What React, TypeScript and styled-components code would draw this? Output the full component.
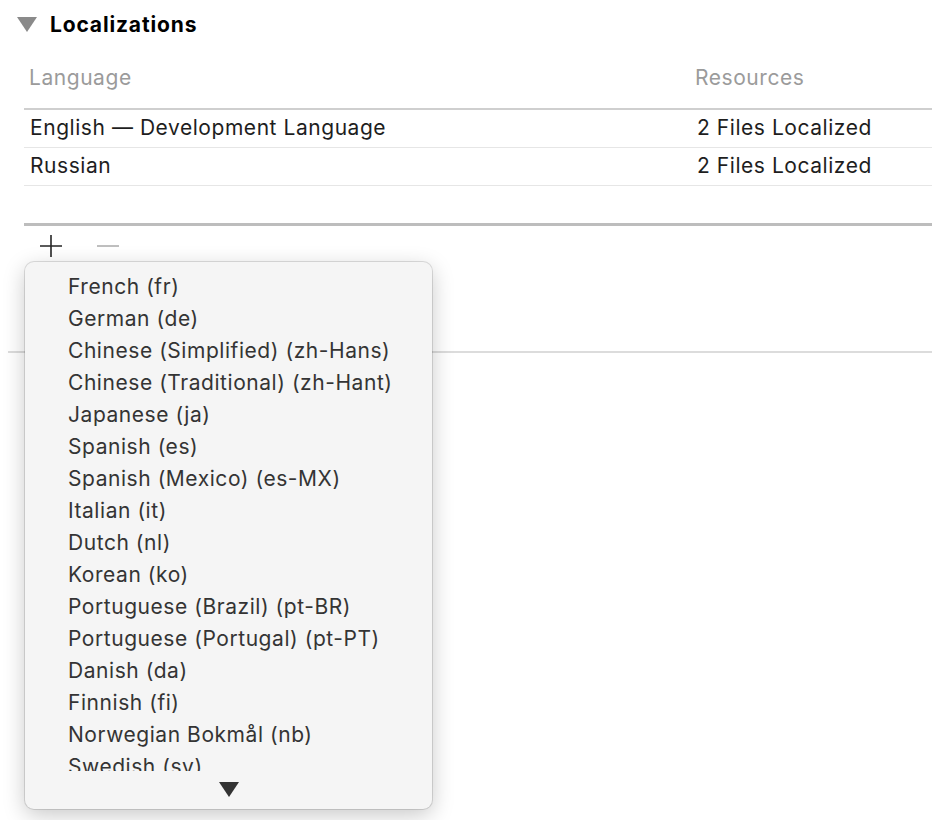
import React from 'react'
import styled, { createGlobalStyle } from 'styled-components'

const GlobalStyle = createGlobalStyle`
    html, body {
        margin: 0;
        padding: 0;
        background: #ffffff;
        overflow: hidden;
    }
    body {
        font-family: Inter, "Helvetica Neue", "Liberation Sans", Arial, sans-serif;
        -webkit-font-smoothing: antialiased;
    }
`

const Page = styled.div`
    position: relative;
    width: 932px;
    height: 820px;
    overflow: hidden;
    background: #ffffff;
`

const SectionHeader = styled.div`
    height: 48px;
    display: flex;
    align-items: center;
    padding-left: 17px;
    gap: 13px;
`

const Disclosure = styled.svg`
    width: 20px;
    height: 15px;
    fill: #8a8a8a;
`

const SectionTitle = styled.h2`
    margin: 0;
    font-size: 21px;
    font-weight: 700;
    color: #000000;
    letter-spacing: 0.85px;
`

const Table = styled.div`
    margin-left: 24px;
`

const Row = styled.div<{ $header?: boolean }>`
    display: grid;
    grid-template-columns: 666px 1fr;
    align-items: center;
    font-size: 21px;
    letter-spacing: 0.55px;
    box-sizing: border-box;
    height: ${p => (p.$header ? '62px' : '38px')};
    padding-bottom: ${p => (p.$header ? '1px' : '3px')};
    color: ${p => (p.$header ? '#9b9b9b' : '#1e1e1e')};
    border-bottom: ${p => (p.$header ? '2px solid #cfcfcf' : '1px solid #e6e6e6')};
`

const Cell = styled.div<{ $offset?: number }>`
    padding-left: ${p => p.$offset ?? 6}px;
    white-space: nowrap;
`

const TableFoot = styled.div`
    height: 37px;
    border-bottom: 3px solid #bdbdbd;
`

const Buttons = styled.div`
    margin-left: 24px;
    height: 40px;
    display: flex;
    align-items: center;
    padding-left: 16px;
    gap: 35px;
`

const IconButton = styled.svg<{ $disabled?: boolean }>`
    width: 22px;
    height: 22px;
    stroke: ${p => (p.$disabled ? '#b0b0b0' : '#262626')};
    stroke-width: 1.6;
    fill: none;
`

const Divider = styled.div`
    margin: 85px 0 0 8px;
    border-top: 2px solid #dcdcdc;
`

const Menu = styled.div`
    position: absolute;
    left: 25px;
    top: 262px;
    width: 407px;
    height: 547px;
    background: #f5f5f5;
    border-radius: 9px;
    box-shadow: 0 0 0 1px rgba(0, 0, 0, 0.12), 0 6px 22px rgba(0, 0, 0, 0.22);
    display: flex;
    flex-direction: column;
    overflow: hidden;
`

const MenuList = styled.ul`
    list-style: none;
    margin: 0;
    padding: 9px 0 0 0;
    box-sizing: border-box;
    height: 509px;
    flex-shrink: 0;
    overflow: hidden;
`

const MenuItem = styled.li`
    height: 32px;
    line-height: 32px;
    padding-left: 43px;
    font-size: 21px;
    letter-spacing: 0.55px;
    color: #343434;
    white-space: nowrap;
`

const ScrollArrow = styled.div`
    flex: 1;
    display: flex;
    justify-content: center;
    align-items: flex-start;
    padding-top: 11px;
`

const ArrowGlyph = styled.svg`
    width: 20px;
    height: 15px;
    fill: #333333;
`

const LANGUAGES = [
    'French (fr)',
    'German (de)',
    'Chinese (Simplified) (zh-Hans)',
    'Chinese (Traditional) (zh-Hant)',
    'Japanese (ja)',
    'Spanish (es)',
    'Spanish (Mexico) (es-MX)',
    'Italian (it)',
    'Dutch (nl)',
    'Korean (ko)',
    'Portuguese (Brazil) (pt-BR)',
    'Portuguese (Portugal) (pt-PT)',
    'Danish (da)',
    'Finnish (fi)',
    'Norwegian Bokmål (nb)',
    'Swedish (sv)',
]

const ROWS = [
    { language: 'English — Development Language', resources: '2 Files Localized' },
    { language: 'Russian', resources: '2 Files Localized' },
]

export default function App() {
    return (
        <Page>
            <GlobalStyle />
            <SectionHeader>
                <Disclosure viewBox="0 0 20 15">
                    <polygon points="0,0 20,0 10,15" />
                </Disclosure>
                <SectionTitle>Localizations</SectionTitle>
            </SectionHeader>

            <Table>
                <Row $header>
                    <Cell $offset={5}>Language</Cell>
                    <Cell $offset={5}>Resources</Cell>
                </Row>
                {ROWS.map(row => (
                    <Row key={row.language}>
                        <Cell>{row.language}</Cell>
                        <Cell $offset={7}>{row.resources}</Cell>
                    </Row>
                ))}
                <TableFoot />
            </Table>

            <Buttons>
                <IconButton viewBox="0 0 22 22">
                    <path d="M11 0 V22 M0 11 H22" />
                </IconButton>
                <IconButton viewBox="0 0 22 22" $disabled>
                    <path d="M0 11 H22" />
                </IconButton>
            </Buttons>

            <Divider />

            <Menu>
                <MenuList>
                    {LANGUAGES.map(name => (
                        <MenuItem key={name}>{name}</MenuItem>
                    ))}
                </MenuList>
                <ScrollArrow>
                    <ArrowGlyph viewBox="0 0 20 15">
                        <polygon points="0,0 20,0 10,15" />
                    </ArrowGlyph>
                </ScrollArrow>
            </Menu>
        </Page>
    )
}
